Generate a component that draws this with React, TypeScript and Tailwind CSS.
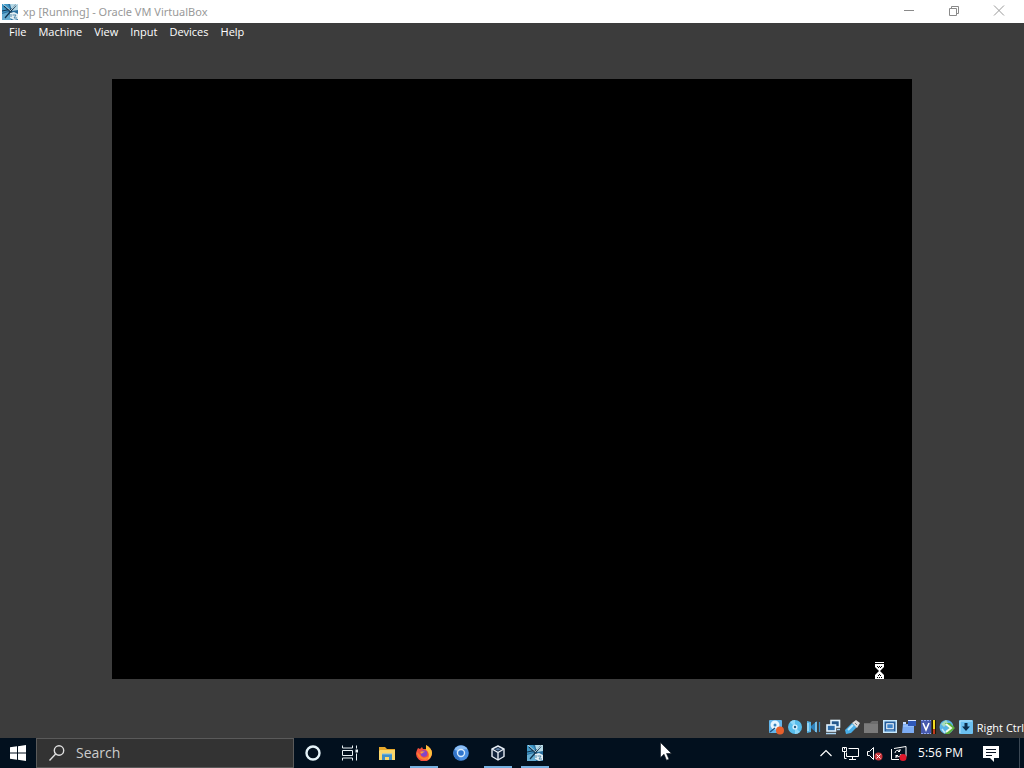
import type { ReactNode } from "react";

const menus = ["File", "Machine", "View", "Input", "Devices", "Help"];

function VmIcon() {
	return (
		<svg viewBox="0 0 16 16" className="size-4 shrink-0" aria-hidden="true">
			<rect width="16" height="16" fill="#2a6f9e" />
			<path d="M0 0h6l3 6-9 3z" fill="#3f97c6" />
			<path d="M8 0h8v6l-6 1z" fill="#b4d8e6" />
			<path d="M0 10l7-2 2 8H0z" fill="#66add2" />
			<path d="M2 2l8 7M14 1L3 14M0 7l10-2" stroke="#12344f" strokeWidth="1.2" />
			<path d="M1 0l8 7M15 0L9 6" stroke="#d8eef6" strokeWidth="0.8" />
			<path d="M8 9l4-1 4 2v5l-4 1-4-2z" fill="#e2eef4" />
			<path d="M9 10v3M10.5 11h3.500l-2 3h3" stroke="#4f86a8" fill="none" />
		</svg>
	);
}

function WindowButtons() {
	return (
		<div className="flex h-full pr-[3px]">
			<button aria-label="Minimize" className="flex w-[45px] justify-center pt-[5px]">
				<svg viewBox="0 0 12 12" className="size-3" fill="none" stroke="#8a8a8a">
					<path d="M1 5.5h10" />
				</svg>
			</button>
			<button aria-label="Restore" className="flex w-[45px] justify-center pt-[5px]">
				<svg viewBox="0 0 12 12" className="size-3" fill="none" stroke="#8a8a8a">
					<path d="M1.5 3.5h7v7h-7zM3.5 3.5v-2h7v7h-2" />
				</svg>
			</button>
			<button aria-label="Close" className="flex w-[45px] justify-center pt-[5px]">
				<svg viewBox="0 0 12 12" className="size-3" fill="none" stroke="#999999">
					<path d="M1 0.5l10 10M11 0.5l-10 10" />
				</svg>
			</button>
		</div>
	);
}

const statusIcons: { name: string; art: ReactNode }[] = [
	{
		name: "Hard disks",
		art: (
			<>
				<rect x="1" y="1" width="13" height="13" rx="1" fill="#62b5ea" />
				<circle cx="7" cy="6" r="4.5" fill="#e8f6ff" />
				<circle cx="7" cy="6" r="1.5" fill="#3a86c0" />
				<path d="M2 13l5-4" stroke="#1c4f80" strokeWidth="1.5" />
				<circle cx="12" cy="11.5" r="4" fill="#e8602c" />
			</>
		),
	},
	{
		name: "Optical drives",
		art: (
			<>
				<circle cx="8" cy="8" r="7" fill="#58bdec" />
				<path d="M8 8L3 3a7 7 0 0 1 5-2zM8 8l5 5a7 7 0 0 1-5 2z" fill="#8fd8f8" />
				<circle cx="8" cy="8" r="2.6" fill="#d8f2ff" />
				<circle cx="8" cy="8" r="1.2" fill="#245c80" />
			</>
		),
	},
	{
		name: "Audio",
		art: (
			<>
				<path d="M1 2l4 1v10l-4 1z" fill="#57b4e6" />
				<path d="M5 7l6-5v12L5 9z" fill="#2f7fb8" />
				<path d="M2 4v8" stroke="#a8e0fa" strokeWidth="1.5" />
				<path d="M10 3v10" stroke="#8fd4f8" strokeWidth="1.5" />
				<path d="M13.5 3v10" stroke="#3a8fc6" strokeWidth="1.2" />
			</>
		),
	},
	{
		name: "Network",
		art: (
			<>
				<rect x="6" y="1.5" width="8.5" height="6.5" fill="#24588c" stroke="#e2f3ff" strokeWidth="1.6" />
				<rect x="2" y="6" width="8.5" height="6" fill="#2d6eac" stroke="#e2f3ff" strokeWidth="1.6" />
				<path d="M1 14.5h10M12 10.5h3" stroke="#a8d4f4" strokeWidth="1.3" />
			</>
		),
	},
	{
		name: "USB",
		art: (
			<>
				<path d="M1 11l7-7 5 4-6 6-5 1z" fill="#48aee8" />
				<path d="M4 11l5-5" stroke="#b8e8ff" strokeWidth="2" />
				<path d="M8 4l4-3 4 3-3 5z" fill="#dcdcdc" />
				<path d="M11 4l2 2" stroke="#777777" />
			</>
		),
	},
	{
		name: "Shared folders",
		art: (
			<>
				<path d="M1 4h6l2-2h6v12H1z" fill="#6c6c6c" />
				<path d="M1 5h14v9H1z" fill="#7b7b7b" />
			</>
		),
	},
	{
		name: "Display",
		art: (
			<>
				<rect x="1.75" y="1.75" width="12.5" height="11.5" fill="#245d9c" stroke="#c8e8fc" strokeWidth="1.5" />
				<rect x="4.75" y="4.75" width="6.5" height="5" fill="#3e83c8" stroke="#ffffff" />
				<path d="M4 12h8" stroke="#84bdec" />
			</>
		),
	},
	{
		name: "Recording",
		art: (
			<>
				<path d="M2 5h11v9H1z" fill="#7cacf4" />
				<path d="M2 7h11" stroke="#a8ccff" />
				<rect x="7" y="1" width="8" height="6" fill="#2f58b8" />
				<path d="M7 1.500h8" stroke="#dce8ff" />
				<path d="M2 4h3" stroke="#c4dcff" strokeWidth="2" />
			</>
		),
	},
	{
		name: "Virtualization features",
		art: (
			<>
				<rect x="1" y="1" width="10" height="14" fill="#4659ae" />
				<path d="M1 1.5h10M1 14.5h10" stroke="#8fa6ec" strokeDasharray="2 1" />
				<path d="M3 4l3 7 3-7" stroke="#ffffff" strokeWidth="1.6" fill="none" />
				<rect x="12" y="1" width="4" height="14" fill="#221800" />
				<path d="M14 1v9" stroke="#f4dc22" strokeWidth="2" />
				<path d="M14 10v5" stroke="#c23a20" strokeWidth="2" />
			</>
		),
	},
	{
		name: "Mouse integration",
		art: (
			<>
				<circle cx="7.500" cy="8" r="7" fill="#58b4e8" />
				<path d="M2 5l5-4 2 3-4 4z" fill="#a4dcc0" />
				<path d="M6 4h5l5 5-6 6H6l4-6z" fill="#5cb03c" />
				<path d="M7 5l5 4-5 4" stroke="#f2fff0" strokeWidth="2" fill="none" />
				<path d="M3 10l3 4" stroke="#c4e8fa" strokeWidth="1.5" />
			</>
		),
	},
	{
		name: "Keyboard capture",
		art: (
			<>
				<rect x="1" y="1" width="14" height="14" rx="1" fill="#6cc0f0" />
				<path d="M2 2h12M2 2v12" stroke="#b8e4fc" />
				<path d="M6.5 4h3v3.5H12L8 12 4 7.5h2.5z" fill="#0a2c4c" />
			</>
		),
	},
];

const apps: { name: string; running: boolean; art: ReactNode }[] = [
	{
		name: "Cortana",
		running: false,
		art: <circle cx="8" cy="8" r="6.5" fill="none" stroke="#e4f2f8" strokeWidth="2.400" />,
	},
	{
		name: "Task View",
		running: false,
		art: (
			<g fill="none" stroke="#e8f0f4">
				<path d="M0.5 0.5v2.5h10v-2.5M0.5 15.5v-2.5h10v2.5M0.5 5.5h10v5h-10zM14.5 0.5v3M14.5 8.5v7" />
				<path d="M13.5 6h2.5" strokeWidth="3" />
			</g>
		),
	},
	{
		name: "File Explorer",
		running: false,
		art: (
			<>
				<path d="M0 2h6l2 2h8v11H0z" fill="#e8a92c" />
				<path d="M1 5h15v10H0V6z" fill="#fbd76c" />
				<path d="M3 15V9h10v6h-3v-3H6v3z" fill="#408fc8" />
				<path d="M3 9h10" stroke="#7cc0ec" />
			</>
		),
	},
	{
		name: "Firefox",
		running: true,
		art: (
			<>
				<path d="M2 3l2 1 2-2 1 2h4l-1-4c4 2 6 5 6 8a8 8 0 0 1-16 1c0-2 1-4 2-6z" fill="#f4513e" />
				<path d="M10 0c4 2 6 5 6 8a8 8 0 0 1-5 7c3-4 2-8-1-10z" fill="#fcc23c" />
				<path d="M1 7c0 5 4 8 9 8 2-1 3-3 3-5-2 3-6 4-8 1z" fill="#fb8232" />
				<circle cx="8" cy="8.5" r="3.2" fill="#8245c8" />
				<path d="M4 7c2-1 4-1 5 0-2 0-3 1-3 2z" fill="#fda436" />
			</>
		),
	},
	{
		name: "Chromium",
		running: false,
		art: (
			<>
				<circle cx="8" cy="8" r="7.8" fill="#4a8ee0" />
				<path d="M8 8L1.5 4.2A7.5 7.5 0 0 1 14.5 4.2H8z" fill="#8cbef4" />
				<path d="M4.5 9.5L1.4 4.5a7.5 7.5 0 0 0 6 11z" fill="#3272c4" />
				<circle cx="8" cy="8" r="4.2" fill="#d8ebfc" />
				<circle cx="8" cy="8" r="2.8" fill="#2f74cc" />
			</>
		),
	},
	{
		name: "VirtualBox",
		running: true,
		art: (
			<>
				<path d="M8 1l6 3v7.5L8 15l-6-3.5V4z" fill="#12243c" stroke="#e4ecf4" strokeWidth="1.4" strokeLinejoin="round" />
				<path d="M2 4l6 3.5L14 4M8 7.5V15" stroke="#e4ecf4" strokeWidth="1.4" fill="none" />
				<path d="M5 4.2l3-1.2 3 1.2-3 1.3z" fill="#5c7da4" />
			</>
		),
	},
];

function Tray() {
	return (
		<div className="flex h-full items-center text-white">
			<button aria-label="Show hidden icons" className="flex w-6 justify-center">
				<svg viewBox="0 0 12 8" className="h-2 w-3" fill="none" stroke="currentColor" strokeWidth="1.2">
					<path d="M0.5 7L6 1.5 11.5 7" />
				</svg>
			</button>
			<button aria-label="Network" className="flex w-6 justify-center">
				<svg viewBox="0 0 17 15" className="h-[15px] w-[17px]" fill="none" stroke="currentColor">
					<path d="M6.5 2.5h10v8h-12v-4M10.5 10.5v3M7 13.5h7" />
					<path d="M0.5 1.5h4v4h-4zM2.5 5.5v7h2M2.5 1.5v2" />
				</svg>
			</button>
			<button aria-label="Volume muted" className="flex w-6 justify-center">
				<svg viewBox="0 0 17 15" className="h-[15px] w-[17px]">
					<path d="M1.5 5.5h2l4-4v12l-4-4h-2z" fill="none" stroke="currentColor" />
					<circle cx="12.5" cy="10.5" r="4" fill="#c8353c" />
					<path d="M10.5 8.5l4 4M14.5 8.5l-4 4" stroke="currentColor" />
				</svg>
			</button>
			<button aria-label="Update status" className="flex w-6 justify-center">
				<svg viewBox="0 0 17 15" className="h-[15px] w-[17px]">
					<path d="M4 2.5L16 0.500v10M9 13.5H1.5V3" fill="none" stroke="currentColor" />
					<path d="M5 7a3 3 0 0 1 5-2V3M10 5.500H8M11 8a3 3 0 0 1-5 2v2M5.500 9.500H8" fill="none" stroke="currentColor" />
					<circle cx="13" cy="11.5" r="3.5" fill="#e0182c" />
				</svg>
			</button>
			<button className="w-[61px] text-center text-xs">5:56 PM</button>
			<button aria-label="Notifications" className="flex w-10 justify-center">
				<svg viewBox="0 0 16 16" className="mt-0.5 size-4">
					<path d="M0 0h16v12h-5v4l-4-4H0z" fill="currentColor" />
					<path d="M3 3.5h10M3 6.5h10M3 9.5h6" stroke="#0a1424" />
				</svg>
			</button>
			<button aria-label="Show desktop" className="ml-2 h-full w-[5px] border-l border-[#3c4854]" />
		</div>
	);
}

function Taskbar() {
	return (
		<footer className="relative flex h-[30px] items-center justify-between bg-[#02101e]">
			<div className="flex h-full">
				<button aria-label="Start" className="flex w-9 items-center justify-center">
					<svg viewBox="0 0 16 16" className="size-4" fill="#ffffff">
						<path d="M0 2.3L7 1.3v6.200H0zM8 1.2L16 0v7.5H8zM0 8.5h7v6.200l-7-1zM8 8.5h8V16l-8-1.200z" />
					</svg>
				</button>
				<label className="flex w-[258px] items-center border border-[#5a5a5a] bg-[#333333] pl-3">
					<svg viewBox="0 0 16 16" className="size-4 shrink-0" fill="none" stroke="#e0e0e0" strokeWidth="1.4">
						<circle cx="10" cy="5.5" r="4.7" />
						<path d="M6.6 9L0.5 15.5" />
					</svg>
					<input
						type="text"
						aria-label="Search"
						placeholder="Search"
						className="ml-[11px] w-full min-w-0 bg-transparent text-sm leading-5 outline-none placeholder:text-[#cccccc]"
					/>
				</label>
				{apps.map((app) => (
					<button key={app.name} aria-label={app.name} className="flex w-[37px] flex-col items-center justify-between pt-[7px]">
						<svg viewBox="0 0 16 16" className="size-4">
							{app.art}
						</svg>
						{app.running && <span className="h-0.5 w-7 bg-[#76b0e0]" />}
					</button>
				))}
				<button aria-label="xp [Running]" className="flex w-[37px] flex-col items-center justify-between pt-[7px]">
					<VmIcon />
					<span className="h-0.5 w-7 bg-[#76b0e0]" />
				</button>
			</div>
			<Tray />
			<svg viewBox="0 0 12 19" className="absolute top-1 left-[660px] h-[19px] w-3" aria-hidden="true">
				<path d="M0.5 0.5v15l3.5-3.3 2.5 6 2.5-1-2.5-5.7h5z" fill="#ffffff" stroke="#101820" strokeWidth="0.6" />
			</svg>
		</footer>
	);
}

export default function App() {
	return (
		<div className="flex min-h-screen flex-col bg-[#3c3c3c] font-['Open_Sans','Noto_Sans',sans-serif]">
			<header className="flex h-[23px] items-center justify-between bg-white">
				<div className="flex items-center gap-[5px] pl-0.5">
					<VmIcon />
					<h1 className="font-['Noto_Sans',sans-serif] text-[11px] leading-4 text-[#999999]">
						xp [Running] - Oracle VM VirtualBox
					</h1>
				</div>
				<WindowButtons />
			</header>
			<nav className="flex h-[18px] items-center pl-[3px] text-[11px] text-white">
				{menus.map((menu) => (
					<button key={menu} className="px-1.5 leading-4">
						{menu}
					</button>
				))}
			</nav>
			<main className="flex flex-1 items-center px-28">
				<div className="relative aspect-4/3 w-full bg-black">
					<svg viewBox="0 0 11 17" className="absolute right-[27px] bottom-0 h-[17px] w-[11px]" aria-hidden="true">
						<path d="M1 0h9v1H1zM1 2h9v3L6 9l4 4v4H1v-4l4-4-4-4z" fill="#ffffff" />
						<path d="M3 4h1v1H3zM5 4h1v1H5zM7 4h1v1H7zM4 5h1v1H4zM6 5h1v1H6zM5 12h1v1H5zM4 13h1v1H4zM6 13h1v1H6zM3 15h1v1H3zM5 15h1v1H5zM7 15h1v1H7z" fill="#000000" />
					</svg>
				</div>
			</main>
			<div className="flex h-[21px] items-center justify-end gap-[3px]">
				{statusIcons.map((icon) => (
					<button key={icon.name} aria-label={icon.name} className="pb-0.5">
						<svg viewBox="0 0 16 16" className="size-4">
							{icon.art}
						</svg>
					</button>
				))}
				<span className="text-[11px] leading-4 text-white">Right Ctrl</span>
			</div>
			<Taskbar />
		</div>
	);
}
